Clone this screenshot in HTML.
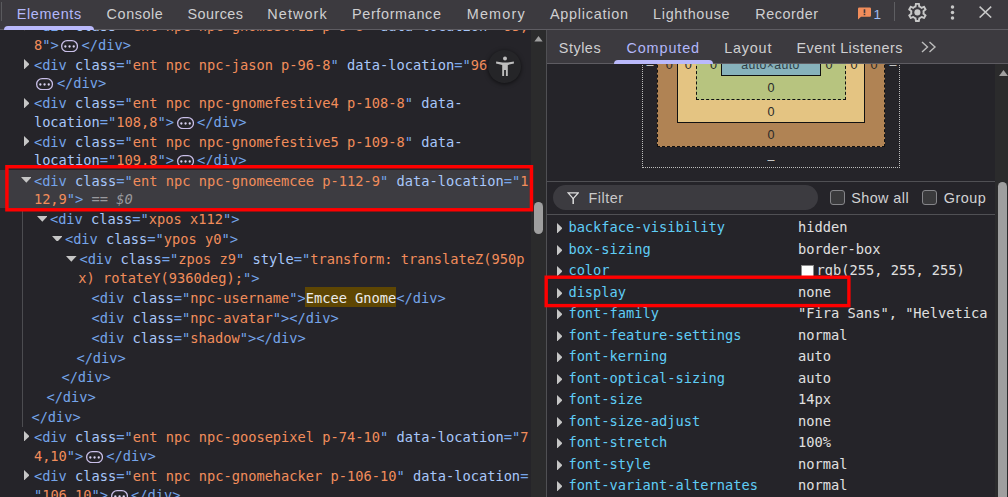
<!DOCTYPE html>
<html><head><meta charset="utf-8"><title>DevTools</title>
<style>
*{box-sizing:border-box;margin:0;padding:0}
html,body{width:1008px;height:497px;overflow:hidden;background:#252429}
body{position:relative;font-family:"Liberation Sans",sans-serif;color:#d4d4d4}
.abs{position:absolute}
#top{position:absolute;left:0;top:0;width:1008px;height:30px;background:#3c3a3f;border-bottom:1px solid #5e5c62;z-index:5}
.tab{position:absolute;top:5.5px;font-size:14.4px;line-height:17px;color:#cfcfd1;white-space:nowrap}
.tab.on{color:#b3b7fa}
.ul{position:absolute;height:4px;background:#bab9fb;border-radius:4px 4px 0 0}
#left{position:absolute;left:0;top:30px;width:531px;height:467px;overflow:hidden;background:#252429}
.ln{position:absolute;font-family:"DejaVu Sans Mono","Liberation Mono",monospace;font-size:13.7px;line-height:16px;height:16px;white-space:pre;color:#dcdcdc}
.t{color:#75a4ea}.a{color:#a8c7fa}.v{color:#f28d5b}
.sel{color:#9a9a9e;font-style:italic}
.hl{background:#5e4603;color:#ececec;padding:2.5px 0 1.5px 1px;margin-left:-1px}
.ar{position:absolute;fill:#c6c6c6}
.el{display:inline-block;vertical-align:-2.2px;margin:0 3.3px 0 2.6px}
#selbg{position:absolute;left:0;top:169.8px;width:531px;height:38.5px;background:#3d3c41}
#red1{position:absolute;left:5.2px;top:165.1px;width:528px;height:46.3px;border:3.4px solid #f00;z-index:4}
#guide{position:absolute;left:22px;top:211px;width:1px;height:216px;background:#4c4c50}
#lsb{position:absolute;left:531px;top:30px;width:15px;height:467px;background:#2b2b2c}
#lthumb{position:absolute;left:534px;top:202px;width:9px;height:32px;border-radius:4.5px;background:#9f9f9f}
#vdiv{position:absolute;left:546px;top:30px;width:1px;height:467px;background:#505054}
#sub{position:absolute;left:547px;top:30px;width:461px;height:34px;background:#3c3a3f;border-bottom:1px solid #5e5c62}
#right{position:absolute;left:547px;top:64px;width:461px;height:433px;background:#252429}
.bx{position:absolute}
.bt{position:absolute;font-size:12.6px;line-height:14px;color:#2a2a2a;text-align:center;width:20px}
#sep1,#sep2{position:absolute;left:547px;width:448px;height:1px;background:#505054}
#pill{position:absolute;left:553px;top:185px;width:265px;height:25px;border-radius:12.5px;background:#3c3b40}
.cb{position:absolute;top:190px;width:15px;height:15px;border:1.4px solid #858589;border-radius:3px;background:#3a3a3c}
.lbl{position:absolute;font-size:14.4px;line-height:17px;color:#d2d2d4;white-space:nowrap}
.pk{color:#5fcdf6}.pv{color:#e0e0e0}
.sw{display:inline-block;width:12.5px;height:12.5px;background:#fff;border:1px solid #8a8a8a;vertical-align:-2px;margin:0 3px 0 3px}
#red2{position:absolute;left:544.5px;top:275.5px;width:306px;height:31.8px;border:3.4px solid #f00;z-index:4}
#rsb{position:absolute;left:995px;top:64px;width:13px;height:433px;background:#2b2b2c}
#rthumb{position:absolute;left:998px;top:182px;width:9px;height:330px;border-radius:4.5px;background:#9f9f9f}
</style></head><body>
<div id="left"></div>
<div id="selbg"></div>
<div id="guide"></div>
<div class="ln" style="top:17.90px;left:33.90px"><span class="t">&lt;div </span><span class="a">class</span><span class="t">="</span><span class="v">ent npc npc-gnomeelf12 p-9-8</span><span class="t">" </span><span class="a">data-location</span><span class="t">="</span><span class="v">95,</span></div>
<svg class="ar" style="top:20.20px;left:23.9px" width="5.6" height="10.4" viewBox="0 0 6 10" preserveAspectRatio="none"><path d="M0 0L6 5L0 10Z"/></svg>
<div class="ln" style="top:36.90px;left:33.90px"><span class="v">8</span><span class="t">"&gt;</span><svg class="el" width="17.1" height="12.4" viewBox="0 0 17.1 12.4"><rect x=".65" y=".65" width="15.8" height="11.1" rx="5.55" fill="none" stroke="#c9bfe8" stroke-width="1.3"/><g fill="#d9d2f0"><circle cx="4.35" cy="6.5" r="1.15"/><circle cx="8.55" cy="6.5" r="1.15"/><circle cx="12.75" cy="6.5" r="1.15"/></g></svg><span class="t">&lt;/div&gt;</span></div>
<div class="ln" style="top:56.60px;left:33.90px"><span class="t">&lt;div </span><span class="a">class</span><span class="t">="</span><span class="v">ent npc npc-jason p-96-8</span><span class="t">"</span><span class="t"> </span><span class="a">data-location</span><span class="t">="</span><span class="v">96</span></div>
<svg class="ar" style="top:58.90px;left:23.9px" width="5.6" height="10.4" viewBox="0 0 6 10" preserveAspectRatio="none"><path d="M0 0L6 5L0 10Z"/></svg>
<div class="ln" style="top:75.20px;left:33.90px"><svg class="el" width="17.1" height="12.4" viewBox="0 0 17.1 12.4"><rect x=".65" y=".65" width="15.8" height="11.1" rx="5.55" fill="none" stroke="#c9bfe8" stroke-width="1.3"/><g fill="#d9d2f0"><circle cx="4.35" cy="6.5" r="1.15"/><circle cx="8.55" cy="6.5" r="1.15"/><circle cx="12.75" cy="6.5" r="1.15"/></g></svg><span class="t">&lt;/div&gt;</span></div>
<div class="ln" style="top:95.30px;left:33.90px"><span class="t">&lt;div </span><span class="a">class</span><span class="t">="</span><span class="v">ent npc npc-gnomefestive4 p-108-8</span><span class="t">"</span><span class="t"> </span><span class="a">data-</span></div>
<svg class="ar" style="top:97.60px;left:23.9px" width="5.6" height="10.4" viewBox="0 0 6 10" preserveAspectRatio="none"><path d="M0 0L6 5L0 10Z"/></svg>
<div class="ln" style="top:113.90px;left:33.90px"><span class="a">location</span><span class="t">="</span><span class="v">108,8</span><span class="t">"&gt;</span><svg class="el" width="17.1" height="12.4" viewBox="0 0 17.1 12.4"><rect x=".65" y=".65" width="15.8" height="11.1" rx="5.55" fill="none" stroke="#c9bfe8" stroke-width="1.3"/><g fill="#d9d2f0"><circle cx="4.35" cy="6.5" r="1.15"/><circle cx="8.55" cy="6.5" r="1.15"/><circle cx="12.75" cy="6.5" r="1.15"/></g></svg><span class="t">&lt;/div&gt;</span></div>
<div class="ln" style="top:133.60px;left:33.90px"><span class="t">&lt;div </span><span class="a">class</span><span class="t">="</span><span class="v">ent npc npc-gnomefestive5 p-109-8</span><span class="t">"</span><span class="t"> </span><span class="a">data-</span></div>
<svg class="ar" style="top:135.90px;left:23.9px" width="5.6" height="10.4" viewBox="0 0 6 10" preserveAspectRatio="none"><path d="M0 0L6 5L0 10Z"/></svg>
<div class="ln" style="top:152.10px;left:33.90px"><span class="a">location</span><span class="t">="</span><span class="v">109,8</span><span class="t">"&gt;</span><svg class="el" width="17.1" height="12.4" viewBox="0 0 17.1 12.4"><rect x=".65" y=".65" width="15.8" height="11.1" rx="5.55" fill="none" stroke="#c9bfe8" stroke-width="1.3"/><g fill="#d9d2f0"><circle cx="4.35" cy="6.5" r="1.15"/><circle cx="8.55" cy="6.5" r="1.15"/><circle cx="12.75" cy="6.5" r="1.15"/></g></svg><span class="t">&lt;/div&gt;</span></div>
<div class="ln" style="top:172.80px;left:33.90px"><span class="t">&lt;div </span><span class="a">class</span><span class="t">="</span><span class="v">ent npc npc-gnomeemcee p-112-9</span><span class="t">"</span><span class="t"> </span><span class="a">data-location</span><span class="t">="</span><span class="v">1</span></div>
<svg class="ar" style="top:177.10px;left:20.70px" width="10.6" height="5.8" viewBox="0 0 10 6" preserveAspectRatio="none"><path d="M0 0L10 0L5 6Z"/></svg>
<div class="ln" style="top:190.90px;left:33.90px"><span class="v">12,9</span><span class="t">"&gt;</span><span class="sel"> == $0</span></div>
<div class="ln" style="top:210.90px;left:49.90px"><span class="t">&lt;div </span><span class="a">class</span><span class="t">="</span><span class="v">xpos x112</span><span class="t">"</span><span class="t">&gt;</span></div>
<svg class="ar" style="top:215.80px;left:36.70px" width="10.6" height="5.8" viewBox="0 0 10 6" preserveAspectRatio="none"><path d="M0 0L10 0L5 6Z"/></svg>
<div class="ln" style="top:230.60px;left:64.90px"><span class="t">&lt;div </span><span class="a">class</span><span class="t">="</span><span class="v">ypos y0</span><span class="t">"</span><span class="t">&gt;</span></div>
<svg class="ar" style="top:235.50px;left:51.70px" width="10.6" height="5.8" viewBox="0 0 10 6" preserveAspectRatio="none"><path d="M0 0L10 0L5 6Z"/></svg>
<div class="ln" style="top:251.20px;left:79.40px"><span class="t">&lt;div </span><span class="a">class</span><span class="t">="</span><span class="v">zpos z9</span><span class="t">"</span><span class="t"> </span><span class="a">style</span><span class="t">="</span><span class="v">transform: translateZ(950p</span></div>
<svg class="ar" style="top:256.10px;left:66.20px" width="10.6" height="5.8" viewBox="0 0 10 6" preserveAspectRatio="none"><path d="M0 0L10 0L5 6Z"/></svg>
<div class="ln" style="top:269.80px;left:78.20px"><span class="v">x) rotateY(9360deg);</span><span class="t">"&gt;</span></div>
<div class="ln" style="top:289.80px;left:91.40px"><span class="t">&lt;div </span><span class="a">class</span><span class="t">="</span><span class="v">npc-username</span><span class="t">"</span><span class="t">&gt;</span><span class="hl">Emcee Gnome</span><span class="t">&lt;/div&gt;</span></div>
<div class="ln" style="top:309.50px;left:91.40px"><span class="t">&lt;div </span><span class="a">class</span><span class="t">="</span><span class="v">npc-avatar</span><span class="t">"</span><span class="t">&gt;&lt;/div&gt;</span></div>
<div class="ln" style="top:330.30px;left:91.40px"><span class="t">&lt;div </span><span class="a">class</span><span class="t">="</span><span class="v">shadow</span><span class="t">"</span><span class="t">&gt;&lt;/div&gt;</span></div>
<div class="ln" style="top:349.80px;left:76.40px"><span class="t">&lt;/div&gt;</span></div>
<div class="ln" style="top:368.70px;left:61.40px"><span class="t">&lt;/div&gt;</span></div>
<div class="ln" style="top:389.30px;left:46.40px"><span class="t">&lt;/div&gt;</span></div>
<div class="ln" style="top:408.50px;left:31.40px"><span class="t">&lt;/div&gt;</span></div>
<div class="ln" style="top:428.70px;left:33.90px"><span class="t">&lt;div </span><span class="a">class</span><span class="t">="</span><span class="v">ent npc npc-goosepixel p-74-10</span><span class="t">"</span><span class="t"> </span><span class="a">data-location</span><span class="t">="</span><span class="v">7</span></div>
<svg class="ar" style="top:431.00px;left:23.9px" width="5.6" height="10.4" viewBox="0 0 6 10" preserveAspectRatio="none"><path d="M0 0L6 5L0 10Z"/></svg>
<div class="ln" style="top:447.80px;left:33.90px"><span class="v">4,10</span><span class="t">"&gt;</span><svg class="el" width="17.1" height="12.4" viewBox="0 0 17.1 12.4"><rect x=".65" y=".65" width="15.8" height="11.1" rx="5.55" fill="none" stroke="#c9bfe8" stroke-width="1.3"/><g fill="#d9d2f0"><circle cx="4.35" cy="6.5" r="1.15"/><circle cx="8.55" cy="6.5" r="1.15"/><circle cx="12.75" cy="6.5" r="1.15"/></g></svg><span class="t">&lt;/div&gt;</span></div>
<div class="ln" style="top:467.50px;left:33.90px"><span class="t">&lt;div </span><span class="a">class</span><span class="t">="</span><span class="v">ent npc npc-gnomehacker p-106-10</span><span class="t">"</span><span class="t"> </span><span class="a">data-location</span><span class="t">=</span></div>
<svg class="ar" style="top:469.80px;left:23.9px" width="5.6" height="10.4" viewBox="0 0 6 10" preserveAspectRatio="none"><path d="M0 0L6 5L0 10Z"/></svg>
<div class="ln" style="top:486.90px;left:33.90px"><span class="t">"</span><span class="v">106,10</span><span class="t">"&gt;</span><svg class="el" width="17.1" height="12.4" viewBox="0 0 17.1 12.4"><rect x=".65" y=".65" width="15.8" height="11.1" rx="5.55" fill="none" stroke="#c9bfe8" stroke-width="1.3"/><g fill="#d9d2f0"><circle cx="4.35" cy="6.5" r="1.15"/><circle cx="8.55" cy="6.5" r="1.15"/><circle cx="12.75" cy="6.5" r="1.15"/></g></svg><span class="t">&lt;/div&gt;</span></div>
<svg class="abs" style="left:0;top:0;z-index:4;pointer-events:none" width="1008" height="497"><rect x="6.925" y="166.725" width="524.55" height="43.05" fill="none" stroke="#ff0000" stroke-width="3.45"/></svg>
<div id="lsb"></div><div id="lthumb"></div>
<svg class="abs" style="left:534px;top:36px" width="9" height="5.5" viewBox="0 0 9 6"><path d="M0 6L4.5 0L9 6Z" fill="#a0a0a0"/></svg>
<!-- accessibility floating button -->
<div class="abs" style="left:488px;top:50px;width:33px;height:33px;border-radius:50%;background:#252528;box-shadow:0 1px 4px rgba(0,0,0,.6);z-index:3"></div>
<svg class="abs" style="left:495px;top:55px;z-index:3" width="20" height="22" viewBox="0 0 20 22"><circle cx="10" cy="3.4" r="2" fill="#bebebe"/><path d="M1.2 6.6 L7.6 7.6 L12.4 7.6 L18.8 6.6 L19 8.6 L12.8 9.9 L12.8 21 L10.9 21 L10.9 15 L9.1 15 L9.1 21 L7.2 21 L7.2 9.9 L1 8.6 Z" fill="#bebebe"/></svg>
<div id="vdiv"></div>
<div id="top">
 <div class="abs" style="left:1px;top:2px;width:1px;height:19px;background:#5a5a5e"></div>
 <div class="tab on" style="left:16.8px;letter-spacing:0.63px">Elements</div>
 <div class="tab" style="left:106.6px;letter-spacing:0.58px">Console</div>
 <div class="tab" style="left:187.6px;letter-spacing:0.43px">Sources</div>
 <div class="tab" style="left:267.3px;letter-spacing:1.10px">Network</div>
 <div class="tab" style="left:352.0px;letter-spacing:0.65px">Performance</div>
 <div class="tab" style="left:466.7px;letter-spacing:1.20px">Memory</div>
 <div class="tab" style="left:549.9px;letter-spacing:0.78px">Application</div>
 <div class="tab" style="left:653.1px;letter-spacing:0.67px">Lighthouse</div>
 <div class="tab" style="left:755.3px;letter-spacing:0.51px">Recorder</div>
 <div class="ul" style="left:4px;top:26px;width:90px"></div>
 <svg class="abs" style="left:858px;top:7px" width="13" height="13" viewBox="0 0 13 13"><path d="M1.2 0.5H11.8Q13 0.5 13 1.7V8.6Q13 9.8 11.8 9.8H3L0 12.6V1.7Q0 0.5 1.2 0.5Z" fill="#f28d5b"/><rect x="5.7" y="2.3" width="1.6" height="3.6" fill="#3c3a3f"/><rect x="5.7" y="6.7" width="1.6" height="1.5" fill="#3c3a3f"/></svg>
 <div class="tab" style="left:873.6px;color:#9fbdf4;font-size:13.6px;top:6.2px">1</div>
 <div class="abs" style="left:893.5px;top:2px;width:1px;height:19px;background:#5e5e62"></div>
 <svg class="abs" style="left:906px;top:1.1px" width="22.8" height="22.8" viewBox="0 0 24 24" fill="#c8c8c8"><path d="M19.43 12.98c.04-.32.07-.64.07-.98 0-.34-.03-.66-.07-.98l2.11-1.65c.19-.15.24-.42.12-.64l-2-3.46c-.09-.16-.26-.25-.44-.25-.06 0-.12.01-.17.03l-2.49 1c-.52-.4-1.08-.73-1.69-.98l-.38-2.65C14.46 2.18 14.25 2 14 2h-4c-.25 0-.46.18-.49.42l-.38 2.65c-.61.25-1.17.59-1.69.98l-2.49-1c-.06-.02-.12-.03-.18-.03-.17 0-.34.09-.43.25l-2 3.46c-.13.22-.07.49.12.64l2.11 1.65c-.04.32-.07.65-.07.98 0 .33.03.66.07.98l-2.11 1.65c-.19.15-.24.42-.12.64l2 3.46c.09.16.26.25.44.25.06 0 .12-.01.17-.03l2.49-1c.52.4 1.08.73 1.69.98l.38 2.65c.03.24.24.42.49.42h4c.25 0 .46-.18.49-.42l.38-2.650c.61-.25 1.17-.59 1.69-.98l2.49 1c.06.02.12.03.18.03.17 0 .34-.09.43-.25l2-3.46c.12-.22.07-.49-.12-.64l-2.11-1.65zm-1.98-1.71c.04.31.05.52.05.73 0 .21-.02.43-.05.73l-.14 1.13.89.7 1.08.84-.7 1.21-1.27-.51-1.04-.42-.9.68c-.43.32-.84.56-1.25.73l-1.06.43-.16 1.13-.2 1.35h-1.400l-.19-1.35-.16-1.13-1.06-.43c-.43-.18-.83-.41-1.23-.71l-.91-.7-1.06.43-1.27.51-.7-1.21 1.08-.84.89-.7-.14-1.13c-.03-.31-.05-.54-.05-.74s.02-.43.05-.73l.14-1.13-.89-.7-1.08-.84.7-1.21 1.270.51 1.04.42.9-.68c.43-.32.84-.56 1.25-.73l1.06-.43.16-1.13.2-1.35h1.39l.19 1.35.16 1.13 1.06.43c.43.18.83.41 1.23.71l.91.7 1.06-.43 1.27-.51.7 1.21-1.070.85-.89.7.14 1.13z"/><circle cx="12" cy="12" r="3.2"/></svg>
 <svg class="abs" style="left:949.9px;top:4px" width="5" height="17" viewBox="0 0 5 17" fill="#c8c8c8"><circle cx="2.5" cy="2.9" r="1.75"/><circle cx="2.5" cy="8.6" r="1.75"/><circle cx="2.5" cy="14" r="1.75"/></svg>
 <svg class="abs" style="left:979.2px;top:6.3px" width="12.8" height="12.2" viewBox="0 0 12.8 12.2" stroke="#c8c8c8" stroke-width="1.5" fill="none"><path d="M0.6 0.6L12.2 11.6M12.2 0.6L0.6 11.6"/></svg>
</div>
<div id="sub">
 <div class="tab" style="left:11.8px;top:9.9px;letter-spacing:0.52px">Styles</div>
 <div class="tab on" style="left:79.4px;top:9.9px;letter-spacing:0.90px">Computed</div>
 <div class="tab" style="left:177.3px;top:9.9px;letter-spacing:0.78px">Layout</div>
 <div class="tab" style="left:249.4px;top:9.9px;letter-spacing:0.49px">Event Listeners</div>
 <svg class="abs" style="left:374px;top:11px" width="16" height="12" viewBox="0 0 16 12" stroke="#bdbdbd" stroke-width="1.4" fill="none"><path d="M1 1L6.5 6L1 11M8.5 1L14 6L8.500 11"/></svg>
 <div class="ul" style="left:67px;top:30px;width:99px"></div>
</div>
<div id="right"></div>
<!-- box model -->
<div id="bm" style="position:absolute;left:547px;top:64px;width:448px;height:117px;overflow:hidden">
<div class="bx" style="left:95px;top:-24px;width:258px;height:128px;border:1px dotted #bdbdbd"></div>
<div class="bx" style="left:110px;top:-24px;width:228px;height:107px;background:#b08354;border:1px dashed #111"></div>
<div class="bx" style="left:130px;top:-24px;width:188px;height:83px;background:#e4c482;border:1px solid #111"></div>
<div class="bx" style="left:149px;top:-24px;width:150px;height:60px;background:#b7c47f;border:1px dashed #111"></div>
<div class="bx" style="left:174px;top:-24px;width:100px;height:36px;background:#87b2bc;border:1px solid #111"></div>
<div class="bt" style="left:193.5px;top:-6px;width:60px;font-size:12.3px;letter-spacing:.4px;color:#2e3e44">auto×auto</div>
<div class="bt" style="left:214px;top:17px">0</div>
<div class="bt" style="left:214px;top:41px">0</div>
<div class="bt" style="left:214px;top:64px">0</div>
<div class="bt" style="left:214px;top:88.5px;color:#d0d0d0">‒</div>
<div class="bt" style="left:112.3px;top:-6px">0</div>
<div class="bt" style="left:131.3px;top:-6px">0</div>
<div class="bt" style="left:156.6px;top:-6px">0</div>
<div class="bt" style="left:272px;top:-6px">0</div>
<div class="bt" style="left:297px;top:-6px">0</div>
<div class="bt" style="left:317px;top:-6px">0</div>
<div class="bt" style="left:93px;top:-6px;color:#d0d0d0">‒</div>
<div class="bt" style="left:336px;top:-6px;color:#d0d0d0">‒</div>
</div>
<div id="sep1" style="top:181px"></div>
<div id="pill"></div>
<svg class="abs" style="left:566.8px;top:192px" width="12.4" height="12.4" viewBox="0 0 12.4 12.4" fill="none" stroke="#dedede" stroke-width="1.25" stroke-linejoin="miter"><path d="M1.2 1H11.2L6.2 6.600Z"/><path d="M6.2 6V12" stroke-width="1.5"/></svg>
<div class="lbl" style="left:588.4px;top:190.3px;color:#c9c9cb;letter-spacing:0.55px">Filter</div>
<div class="cb" style="left:830px"></div><div class="lbl" style="left:851.2px;top:190.3px;letter-spacing:0.43px">Show all</div>
<div class="cb" style="left:922px"></div><div class="lbl" style="left:943.7px;top:190.3px;letter-spacing:0.50px">Group</div>
<div id="sep2" style="top:214px"></div>
<svg class="ar" style="top:222.70px;left:556.8px" width="5.6" height="10.5" viewBox="0 0 6 10" preserveAspectRatio="none"><path d="M0 0L6 5L0 10Z"/></svg>
<div class="ln pk" style="top:219.00px;left:568.4px">backface-visibility</div>
<div class="ln pv" style="top:219.00px;left:798px">hidden</div>
<svg class="ar" style="top:244.70px;left:556.8px" width="5.6" height="10.5" viewBox="0 0 6 10" preserveAspectRatio="none"><path d="M0 0L6 5L0 10Z"/></svg>
<div class="ln pk" style="top:241.00px;left:568.4px">box-sizing</div>
<div class="ln pv" style="top:241.00px;left:798px">border-box</div>
<svg class="ar" style="top:265.70px;left:556.8px" width="5.6" height="10.5" viewBox="0 0 6 10" preserveAspectRatio="none"><path d="M0 0L6 5L0 10Z"/></svg>
<div class="ln pk" style="top:262.00px;left:568.4px">color</div>
<div class="ln pv" style="top:262.00px;left:798px"><span class="sw"></span>rgb(255, 255, 255)</div>
<svg class="ar" style="top:287.70px;left:556.8px" width="5.6" height="10.5" viewBox="0 0 6 10" preserveAspectRatio="none"><path d="M0 0L6 5L0 10Z"/></svg>
<div class="ln pk" style="top:284.00px;left:568.4px">display</div>
<div class="ln pv" style="top:284.00px;left:798px">none</div>
<svg class="ar" style="top:308.70px;left:556.8px" width="5.6" height="10.5" viewBox="0 0 6 10" preserveAspectRatio="none"><path d="M0 0L6 5L0 10Z"/></svg>
<div class="ln pk" style="top:305.00px;left:568.4px">font-family</div>
<div class="ln pv" style="top:305.00px;left:798px">"Fira Sans", "Helvetica</div>
<svg class="ar" style="top:330.70px;left:556.8px" width="5.6" height="10.5" viewBox="0 0 6 10" preserveAspectRatio="none"><path d="M0 0L6 5L0 10Z"/></svg>
<div class="ln pk" style="top:327.00px;left:568.4px">font-feature-settings</div>
<div class="ln pv" style="top:327.00px;left:798px">normal</div>
<svg class="ar" style="top:351.70px;left:556.8px" width="5.6" height="10.5" viewBox="0 0 6 10" preserveAspectRatio="none"><path d="M0 0L6 5L0 10Z"/></svg>
<div class="ln pk" style="top:348.00px;left:568.4px">font-kerning</div>
<div class="ln pv" style="top:348.00px;left:798px">auto</div>
<svg class="ar" style="top:373.70px;left:556.8px" width="5.6" height="10.5" viewBox="0 0 6 10" preserveAspectRatio="none"><path d="M0 0L6 5L0 10Z"/></svg>
<div class="ln pk" style="top:370.00px;left:568.4px">font-optical-sizing</div>
<div class="ln pv" style="top:370.00px;left:798px">auto</div>
<svg class="ar" style="top:394.70px;left:556.8px" width="5.6" height="10.5" viewBox="0 0 6 10" preserveAspectRatio="none"><path d="M0 0L6 5L0 10Z"/></svg>
<div class="ln pk" style="top:391.00px;left:568.4px">font-size</div>
<div class="ln pv" style="top:391.00px;left:798px">14px</div>
<svg class="ar" style="top:416.70px;left:556.8px" width="5.6" height="10.5" viewBox="0 0 6 10" preserveAspectRatio="none"><path d="M0 0L6 5L0 10Z"/></svg>
<div class="ln pk" style="top:413.00px;left:568.4px">font-size-adjust</div>
<div class="ln pv" style="top:413.00px;left:798px">none</div>
<svg class="ar" style="top:437.70px;left:556.8px" width="5.6" height="10.5" viewBox="0 0 6 10" preserveAspectRatio="none"><path d="M0 0L6 5L0 10Z"/></svg>
<div class="ln pk" style="top:434.00px;left:568.4px">font-stretch</div>
<div class="ln pv" style="top:434.00px;left:798px">100%</div>
<svg class="ar" style="top:459.70px;left:556.8px" width="5.6" height="10.5" viewBox="0 0 6 10" preserveAspectRatio="none"><path d="M0 0L6 5L0 10Z"/></svg>
<div class="ln pk" style="top:456.00px;left:568.4px">font-style</div>
<div class="ln pv" style="top:456.00px;left:798px">normal</div>
<svg class="ar" style="top:480.70px;left:556.8px" width="5.6" height="10.5" viewBox="0 0 6 10" preserveAspectRatio="none"><path d="M0 0L6 5L0 10Z"/></svg>
<div class="ln pk" style="top:477.00px;left:568.4px">font-variant-alternates</div>
<div class="ln pv" style="top:477.00px;left:798px">normal</div>
<svg class="abs" style="left:0;top:0;z-index:4;pointer-events:none" width="1008" height="497"><rect x="546.2" y="277.2" width="302.7" height="28.4" fill="none" stroke="#ff0000" stroke-width="3.4"/></svg>
<div id="rsb"></div><div id="rthumb"></div>
<svg class="abs" style="left:998.500px;top:70px" width="9" height="6" viewBox="0 0 9 6"><path d="M0 6L4.5 0L9 6Z" fill="#a0a0a0"/></svg>
</body></html>
